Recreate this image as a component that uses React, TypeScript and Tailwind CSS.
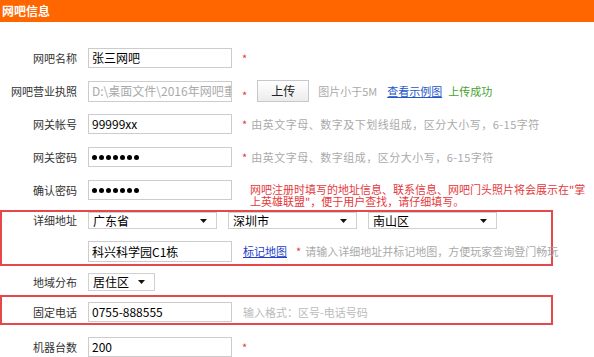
import React from 'react';

const Label = ({ text, w = 'w-[77px]' }: { text: string; w?: string }) => (
  <div className={`${w} shrink-0 text-right text-[11px] text-[#333]`}>{text}</div>
);

const Box = ({ children, w = 'w-[144px]', h = 'h-[20px]', muted = false }: { children?: React.ReactNode; w?: string; h?: string; muted?: boolean }) => (
  <div
    className={`${w} ${h} flex items-center overflow-hidden whitespace-nowrap border border-[#cccccc] bg-white px-[3px] text-[12px] ${muted ? 'text-[#aaaaaa]' : 'text-black'}`}
  >
    {children}
  </div>
);

const Star = ({ className = '' }: { className?: string }) => (
  <span className={`text-[11px] text-[#e4393c] ${className}`}>*</span>
);

const Hint = ({ children, className = '' }: { children: React.ReactNode; className?: string }) => (
  <span className={`whitespace-nowrap text-[11px] text-[#aaaaaa] ${className}`}>{children}</span>
);

const Caret = () => (
  <svg width="7" height="4" viewBox="0 0 7 4" className="shrink-0">
    <path d="M0 0h7L3.5 4z" fill="#111" />
  </svg>
);

const Select = ({ value, w }: { value: string; w: string }) => (
  <div className={`${w} flex h-full items-center justify-between border border-[#d0d0d0] bg-white pl-[4px] pr-[9px] text-[12px] text-black`}>
    <span>{value}</span>
    <Caret />
  </div>
);

const Dots = () => (
  <span className="flex gap-[2px]">
    {Array.from({ length: 7 }).map((_, i) => (
      <span key={i} className="h-[5px] w-[5px] rounded-full bg-black" />
    ))}
  </span>
);

export default function App() {
  return (
    <div className="h-[357px] w-[594px] overflow-hidden bg-white font-['Noto_Sans_CJK_SC','Liberation_Sans',sans-serif]">
      {/* header */}
      <div className="flex h-[22px] items-center bg-[#ff6600] pl-[2px] text-[12px] font-bold text-white">网吧信息</div>

      <div className="flex flex-col">
        {/* 网吧名称 */}
        <div className="mt-[26px] flex h-[20px] items-center">
          <Label text="网吧名称" />
          <div className="ml-[11px] flex items-center">
            <Box>张三网吧</Box>
            <Star className="ml-[10px]" />
          </div>
        </div>

        {/* 营业执照 */}
        <div className="mt-[12px] flex h-[22px] items-center">
          <Label text="网吧营业执照" />
          <div className="ml-[11px] flex h-full items-center">
            <Box h="h-[21px]" muted>D:\桌面文件\2016年网吧重.</Box>
            <Star className="ml-[10px] mt-[8px]" />
            <div className="ml-[10px] flex h-[22px] w-[52px] items-center justify-center border border-[#c8c8c8] bg-gradient-to-b from-white to-[#ececec] text-[12px] text-[#222]">
              上传
            </div>
            <Hint className="ml-[9px]">图片小于5M</Hint>
            <span className="ml-[10px] whitespace-nowrap text-[11px] text-[#2556c6] underline">查看示例图</span>
            <span className="ml-[6px] whitespace-nowrap text-[11px] text-[#43a32a]">上传成功</span>
          </div>
        </div>

        {/* 网关帐号 */}
        <div className="mt-[12px] flex h-[20px] items-center">
          <Label text="网关帐号" />
          <div className="ml-[11px] flex items-center">
            <Box>99999xx</Box>
            <Star className="ml-[10px]" />
            <Hint className="ml-[4px] tracking-[0.5px]">由英文字母、数字及下划线组成，区分大小写，6-15字符</Hint>
          </div>
        </div>

        {/* 网关密码 */}
        <div className="mt-[13px] flex h-[20px] items-center">
          <Label text="网关密码" />
          <div className="ml-[11px] flex items-center">
            <Box><Dots /></Box>
            <Star className="ml-[10px]" />
            <Hint className="ml-[4px] tracking-[0.5px]">由英文字母、数字组成，区分大小写，6-15字符</Hint>
          </div>
        </div>

        {/* 确认密码 */}
        <div className="mt-[13px] flex h-[20px] items-center">
          <Label text="确认密码" />
          <div className="ml-[11px] flex h-full items-start">
            <Box><Dots /></Box>
            <div className="ml-[18px] mt-[3px] whitespace-nowrap text-[11px] leading-[12px] text-[#e4393c]">
              网吧注册时填写的地址信息、联系信息、网吧门头照片将会展示在"掌
              <br />
              上英雄联盟"，便于用户查找，请仔细填写。
            </div>
          </div>
        </div>

        {/* 详细地址 */}
        <div className="mt-[10px] flex w-[553px] flex-col border-2 border-[#e5484b] pb-[2px]">
          <div className="flex h-[17px] items-center">
            <Label text="详细地址" w="w-[75px]" />
            <div className="ml-[11px] flex h-full items-center gap-[11px]">
              <Select value="广东省" w="w-[129px]" />
              <Select value="深圳市" w="w-[129px]" />
              <Select value="南山区" w="w-[129px]" />
            </div>
          </div>
          <div className="mt-[12px] flex h-[21px] items-center">
            <div className="w-[75px] shrink-0" />
            <div className="ml-[11px] flex items-center">
              <Box h="h-[21px]">科兴科学园C1栋</Box>
              <span className="ml-[11px] whitespace-nowrap text-[11px] text-[#2241c8] underline">标记地图</span>
              <Star className="ml-[9px]" />
              <Hint className="ml-[4px]">请输入详细地址并标记地图，方便玩家查询登门畅玩</Hint>
            </div>
          </div>
        </div>

        {/* 地域分布 */}
        <div className="mt-[7px] flex h-[18px] items-center">
          <Label text="地域分布" />
          <div className="ml-[11px] flex h-full items-center">
            <Select value="居住区" w="w-[67px]" />
          </div>
        </div>

        {/* 固定电话 */}
        <div className="mt-[4px] flex w-[553px] items-center border-2 border-[#e5484b] pb-[1px] pt-[5px]">
          <Label text="固定电话" w="w-[75px]" />
          <div className="ml-[11px] flex items-center">
            <Box>0755-888555</Box>
            <Hint className="ml-[11px] text-[#bbbbbb]">输入格式：区号-电话号码</Hint>
          </div>
        </div>

        {/* 机器台数 */}
        <div className="mt-[12px] flex h-[20px] items-center">
          <Label text="机器台数" />
          <div className="ml-[11px] flex items-center">
            <Box>200</Box>
            <Star className="ml-[10px]" />
          </div>
        </div>
      </div>
    </div>
  );
}
